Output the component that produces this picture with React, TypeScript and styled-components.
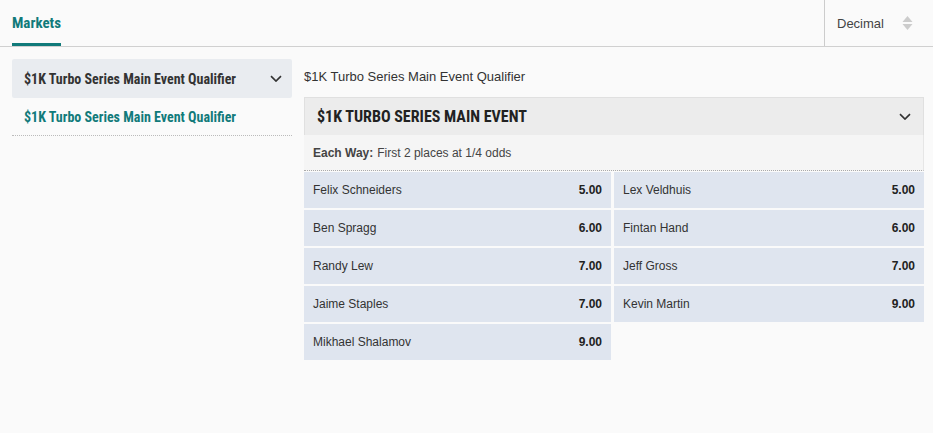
import React from 'react';
import styled, {createGlobalStyle} from "styled-components";

const GlobalStyle = createGlobalStyle`
  body {
    margin: 0;
    background: #fafafa;
    font-family: Arial, "Liberation Sans", sans-serif;
    color: #333;
  }
`;

const teal = "#117a7a";
const headFont = `"Roboto Condensed", "Liberation Sans Narrow", "DejaVu Sans Condensed", Roboto, sans-serif`;

const Page = styled.div`
  width: 933px;
  height: 433px;
  background: #fafafa;
`;

const TopBar = styled.div`
  height: 46px;
  display: flex;
  justify-content: space-between;
  border-bottom: 1px solid #d0d0d0;
`;

const Tab = styled.div`
  margin-left: 12px;
  height: 46px;
  box-sizing: border-box;
  display: flex;
  align-items: center;
  padding-top: 2px;
  font-family: ${headFont};
  font-weight: 700;
  font-size: 15px;
  color: ${teal};
  border-bottom: 3px solid ${teal};
`;

const OddsFormat = styled.div`
  width: 109px;
  box-sizing: border-box;
  border-left: 1px solid #ccc;
  display: flex;
  align-items: center;
  justify-content: space-between;
  padding: 0 20px 0 12px;
  font-size: 13px;
  color: #444;
`;

const Body = styled.div`
  display: flex;
  gap: 12px;
  padding: 12px 9px 0 12px;
`;

const Sidebar = styled.div`
  width: 280px;
  flex-shrink: 0;
`;

const SideHeader = styled.div`
  height: 39px;
  background: #e9ecf0;
  border-radius: 2px;
  display: flex;
  align-items: center;
  justify-content: space-between;
  padding: 0 10px 0 12px;
  font-family: ${headFont};
  font-weight: 700;
  font-size: 14px;
  color: #333;
`;

const SideLink = styled.div`
  height: 37px;
  display: flex;
  align-items: center;
  padding-left: 12px;
  font-family: ${headFont};
  font-weight: 700;
  font-size: 14px;
  color: ${teal};
  border-bottom: 1px dotted #bbb;
`;

const Main = styled.div`
  flex: 1;
`;

const EventTitle = styled.div`
  height: 38px;
  box-sizing: border-box;
  padding-top: 10px;
  font-size: 13px;
  color: #333;
`;

const MarketHeader = styled.div`
  height: 38px;
  box-sizing: border-box;
  background: #ececec;
  border: 1px solid #e0e0e0;
  border-bottom: none;
  display: flex;
  align-items: center;
  justify-content: space-between;
  padding: 0 12px 0 12px;
  font-family: ${headFont};
  font-weight: 700;
  font-size: 16px;
  text-transform: uppercase;
  color: #222;
`;

const EachWay = styled.div`
  height: 35px;
  background: #f5f5f5;
  border-right: 1px solid #e6e6e6;
  border-bottom: 1px dotted #aaa;
  display: flex;
  align-items: center;
  padding-left: 9px;
  font-size: 12px;
  color: #444;

  b {
    margin-right: 4px;
  }
`;

const Grid = styled.div`
  display: grid;
  grid-template-columns: 307px 1fr;
  column-gap: 3px;
  row-gap: 2px;
  margin-top: 1px;
`;

const Cell = styled.div`
  height: 36px;
  background: #dfe5ef;
  display: flex;
  align-items: center;
  justify-content: space-between;
  padding: 0 9px 0 9px;
  font-size: 12px;
  color: #333;
`;

const Price = styled.span`
  font-weight: 700;
  color: #222;
`;

const Chevron = ({size = 12}: {size?: number}) => (
    <svg width={size} height={size * 0.6} viewBox="0 0 12 7">
      <path d="M1 1 L6 6 L11 1" fill="none" stroke="#333" strokeWidth="1.6"/>
    </svg>
);

const SortArrows = () => (
    <svg width="11" height="16" viewBox="0 0 11 16">
      <path d="M5.5 1 L10.5 7 L0.5 7 Z" fill="#ccc"/>
      <path d="M5.5 15 L10.5 9 L0.5 9 Z" fill="#ccc"/>
    </svg>
);

const runners: [string, string][] = [
  ["Felix Schneiders", "5.00"],
  ["Lex Veldhuis", "5.00"],
  ["Ben Spragg", "6.00"],
  ["Fintan Hand", "6.00"],
  ["Randy Lew", "7.00"],
  ["Jeff Gross", "7.00"],
  ["Jaime Staples", "7.00"],
  ["Kevin Martin", "9.00"],
  ["Mikhael Shalamov", "9.00"],
];

const App: React.FC = () => {
  return (
      <Page>
        <GlobalStyle/>
        <TopBar>
          <Tab>Markets</Tab>
          <OddsFormat>
            <span>Decimal</span>
            <SortArrows/>
          </OddsFormat>
        </TopBar>
        <Body>
          <Sidebar>
            <SideHeader>
              <span>$1K Turbo Series Main Event Qualifier</span>
              <Chevron/>
            </SideHeader>
            <SideLink>$1K Turbo Series Main Event Qualifier</SideLink>
          </Sidebar>
          <Main>
            <EventTitle>$1K Turbo Series Main Event Qualifier</EventTitle>
            <MarketHeader>
              <span>$1K Turbo Series Main Event</span>
              <Chevron/>
            </MarketHeader>
            <EachWay><b>Each Way:</b> First 2 places at 1/4 odds</EachWay>
            <Grid>
              {runners.map(([name, price]) => (
                  <Cell key={name}>
                    <span>{name}</span>
                    <Price>{price}</Price>
                  </Cell>
              ))}
            </Grid>
          </Main>
        </Body>
      </Page>
  );
};

export default App;
